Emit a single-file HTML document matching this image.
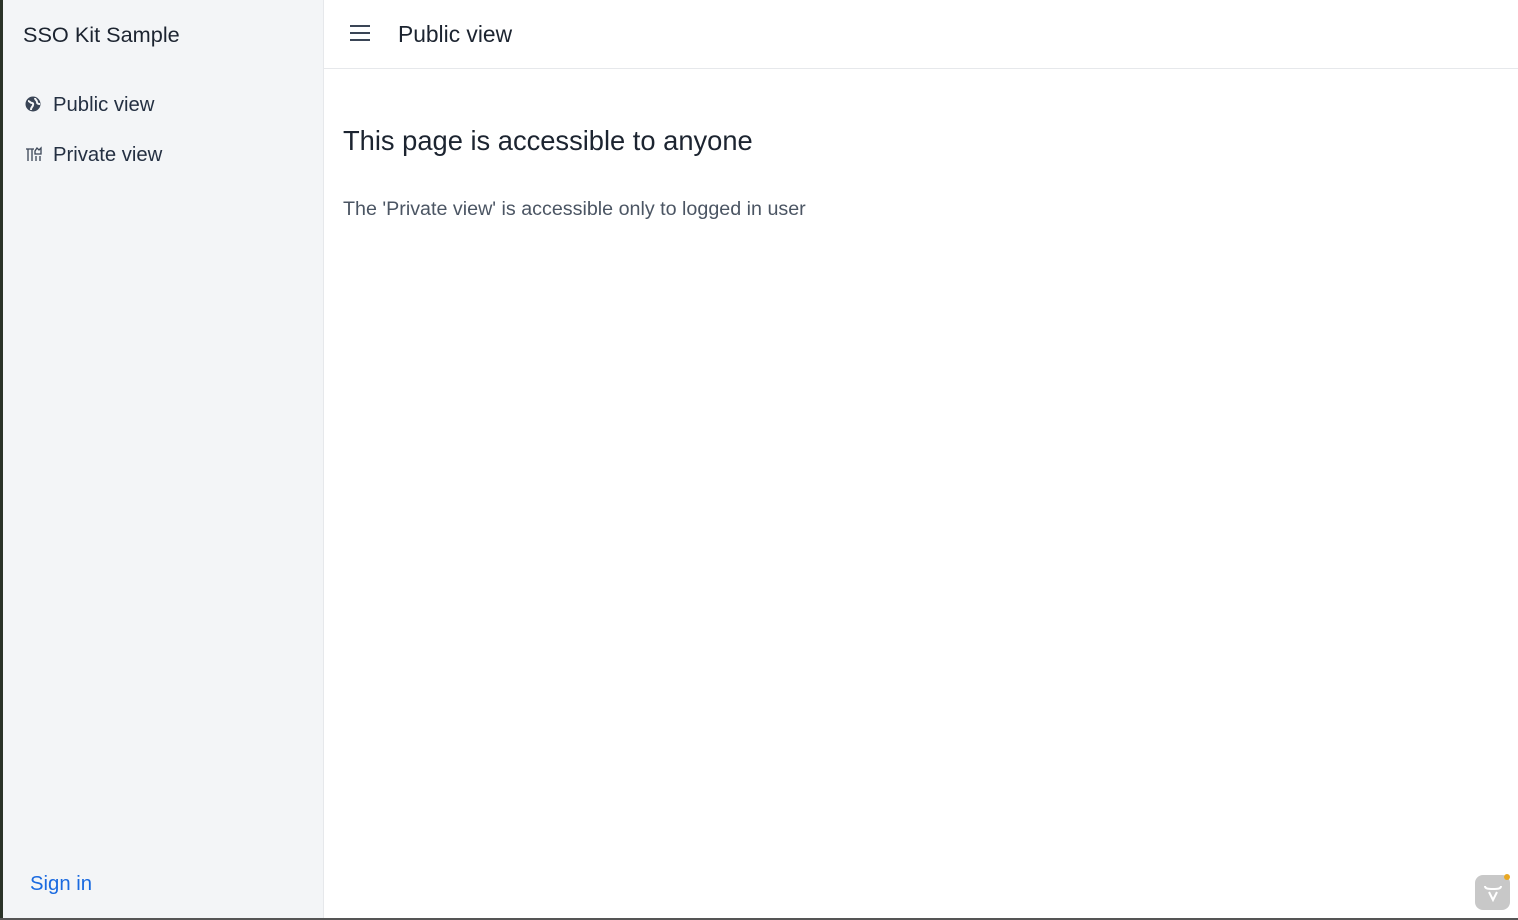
<!DOCTYPE html>
<html><head><style>
body{margin:0;width:1518px;height:920px;overflow:hidden;font-family:"Liberation Sans",sans-serif;background:#fff;position:relative}
.edge{position:absolute;left:0;top:0;width:3px;height:920px;background:#2a3328}
.side{position:absolute;left:3px;top:0;width:320px;height:920px;background:#f3f5f7;border-right:1px solid #e6e8eb}
.brand{position:absolute;left:20px;top:22px;font-size:21.7px;color:#1c2430}
.nav{position:absolute;left:22px;font-size:20.3px;color:#243042}
.nav svg{position:absolute;left:0;top:2px}
.nav span{position:absolute;left:28px;top:0;white-space:nowrap}
.sign{position:absolute;left:27px;top:873px;font-size:20.3px;color:#1a6ae0}
.top{position:absolute;left:324px;top:0;right:0;height:68px;border-bottom:1px solid #e6e8eb}
h1{position:absolute;left:343px;top:125px;margin:0;font-size:27.3px;font-weight:normal;color:#1c2430}
p{position:absolute;left:343px;top:198px;margin:0;font-size:19.7px;color:#4b5563}
.bottom{position:absolute;left:0;bottom:0;width:1518px;height:2px;background:#555}
</style></head><body>
<div class="edge"></div>
<div class="side">
<div class="brand">SSO Kit Sample</div>
<div class="nav" style="top:94px"><svg width="16" height="16" viewBox="0 0 16 16"><circle cx="8" cy="8" r="7.5" fill="#3a4556"/><path d="M3 5c2 0 2 2 4 2s1 3 0 4-1 3-1 3M10 2c0 2 2 2 2 4s2 2 3 2" stroke="#f3f5f7" stroke-width="2" fill="none"/></svg><span>Public view</span></div>
<div class="nav" style="top:144px"><svg width="17" height="16" viewBox="0 0 17 16" fill="none" stroke="#3a4556" stroke-width="1.3"><path d="M1 3h8M3 3v12M7 3v12M10 5l2-3 2 2 2-2v6h-6zM11 10v5M15 10v5"/></svg><span>Private view</span></div>
<div class="sign">Sign in</div>
</div>
<div class="top">
<svg style="position:absolute;left:26px;top:24px" width="20" height="18"><path d="M0 2h20M0 9h20M0 16h20" stroke="#3a4556" stroke-width="2"/></svg>
<div style="position:absolute;left:74px;top:21px;font-size:22.8px;color:#1c2430">Public view</div>
</div>
<h1>This page is accessible to anyone</h1>
<p>The 'Private view' is accessible only to logged in user</p>
<div style="position:absolute;left:1475px;top:875px;width:35px;height:35px;border-radius:8px;background:#c8c8c8"></div>
<div style="position:absolute;left:1504px;top:874px;width:6px;height:6px;border-radius:3px;background:#e9a824"></div>
<svg style="position:absolute;left:1484px;top:884px" width="18" height="18" fill="none" stroke="#fff" stroke-width="2"><path d="M1 2c0 3 4 3 8 3s8 0 8-3M5 8l4 8 4-8"/></svg>
<div class="bottom"></div>
</body></html>
